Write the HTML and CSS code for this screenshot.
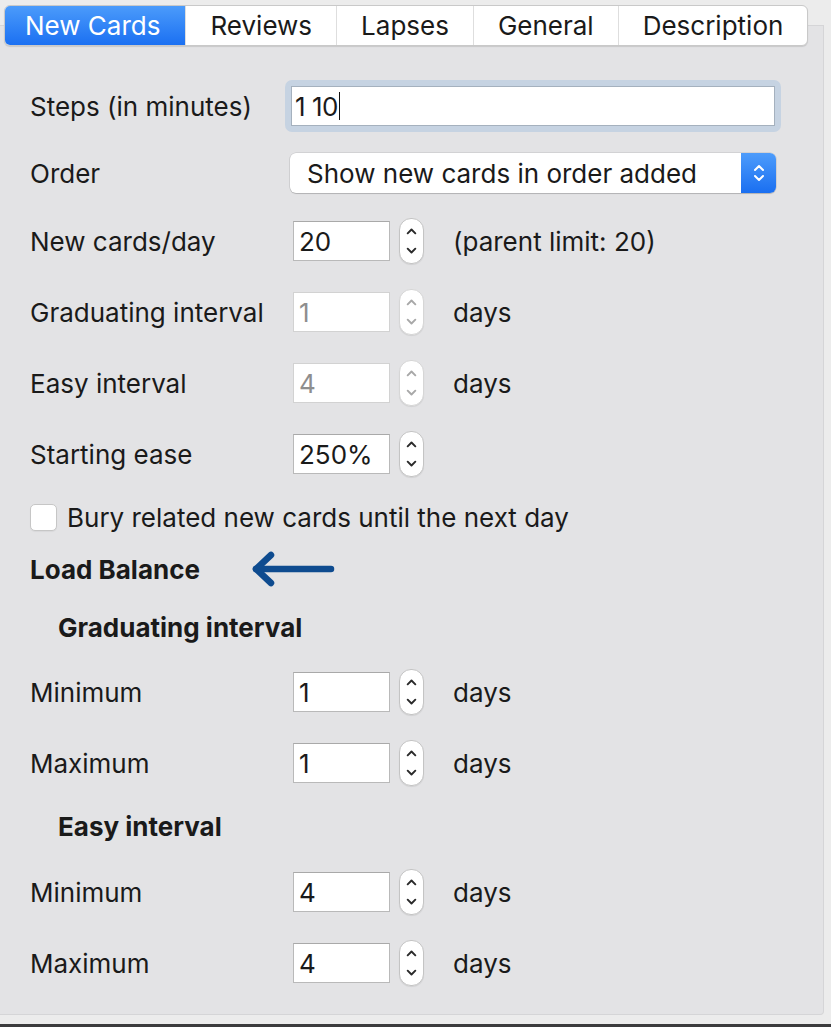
FILE: index.html
```html
<!DOCTYPE html>
<html lang="en">
<head>
<meta charset="utf-8">
<title>Options</title>
<link rel="stylesheet" href="styles.css">
</head>
<body>
<div class="tabbar">
  <div class="tab active">New Cards</div>
  <div class="tab">Reviews</div>
  <div class="tab">Lapses</div>
  <div class="tab">General</div>
  <div class="tab">Description</div>
</div>
<div class="panel">
  <div class="form">
    <div class="row">
      <span class="label">Steps (in minutes)</span>
      <div class="focus-ring"><div class="textfield">1 10<span class="caret"></span></div></div>
    </div>
    <div class="row row-order">
      <span class="label">Order</span>
      <div class="select">
        <span class="select-text">Show new cards in order added</span>
        <span class="select-btn">
          <svg width="14" height="22" viewBox="0 0 14 22"><polyline points="3,8 7,4 11,8" /><polyline points="3,14 7,18 11,14" /></svg>
        </span>
      </div>
    </div>
    <div class="row row-newcards">
      <span class="label">New cards/day</span>
      <div class="spin">
        <div class="numfield">20</div>
        <div class="stepper"><svg width="24" height="44" viewBox="0 0 24 44"><polyline points="8,14 12,10 16,14"/><polyline points="8,30 12,34 16,30"/></svg></div>
      </div>
      <span class="suffix">(parent limit: 20)</span>
    </div>
    <div class="row disabled">
      <span class="label">Graduating interval</span>
      <div class="spin">
        <div class="numfield">1</div>
        <div class="stepper"><svg width="24" height="44" viewBox="0 0 24 44"><polyline points="8,14 12,10 16,14"/><polyline points="8,30 12,34 16,30"/></svg></div>
      </div>
      <span class="suffix">days</span>
    </div>
    <div class="row disabled">
      <span class="label">Easy interval</span>
      <div class="spin">
        <div class="numfield">4</div>
        <div class="stepper"><svg width="24" height="44" viewBox="0 0 24 44"><polyline points="8,14 12,10 16,14"/><polyline points="8,30 12,34 16,30"/></svg></div>
      </div>
      <span class="suffix">days</span>
    </div>
    <div class="row">
      <span class="label">Starting ease</span>
      <div class="spin">
        <div class="numfield">250%</div>
        <div class="stepper"><svg width="24" height="44" viewBox="0 0 24 44"><polyline points="8,14 12,10 16,14"/><polyline points="8,30 12,34 16,30"/></svg></div>
      </div>
    </div>
    <div class="row row-check">
      <span class="checkbox"></span>
      <span class="check-label">Bury related new cards until the next day</span>
    </div>
    <div class="row row-section">
      <span class="section-title">Load Balance</span>
      <svg class="arrow" width="86" height="46" viewBox="0 0 86 46"><polyline points="21,9 6,23 21,37"/><line x1="6" y1="23" x2="81" y2="23"/></svg>
    </div>
    <div class="row row-sub">
      <span class="sub-title">Graduating interval</span>
    </div>
    <div class="row row-after-sub">
      <span class="label">Minimum</span>
      <div class="spin">
        <div class="numfield">1</div>
        <div class="stepper"><svg width="24" height="44" viewBox="0 0 24 44"><polyline points="8,14 12,10 16,14"/><polyline points="8,30 12,34 16,30"/></svg></div>
      </div>
      <span class="suffix">days</span>
    </div>
    <div class="row">
      <span class="label">Maximum</span>
      <div class="spin">
        <div class="numfield">1</div>
        <div class="stepper"><svg width="24" height="44" viewBox="0 0 24 44"><polyline points="8,14 12,10 16,14"/><polyline points="8,30 12,34 16,30"/></svg></div>
      </div>
      <span class="suffix">days</span>
    </div>
    <div class="row row-sub row-sub2">
      <span class="sub-title">Easy interval</span>
    </div>
    <div class="row row-after-sub2">
      <span class="label">Minimum</span>
      <div class="spin">
        <div class="numfield">4</div>
        <div class="stepper"><svg width="24" height="44" viewBox="0 0 24 44"><polyline points="8,14 12,10 16,14"/><polyline points="8,30 12,34 16,30"/></svg></div>
      </div>
      <span class="suffix">days</span>
    </div>
    <div class="row">
      <span class="label">Maximum</span>
      <div class="spin">
        <div class="numfield">4</div>
        <div class="stepper"><svg width="24" height="44" viewBox="0 0 24 44"><polyline points="8,14 12,10 16,14"/><polyline points="8,30 12,34 16,30"/></svg></div>
      </div>
      <span class="suffix">days</span>
    </div>
  </div>
</div>
<div class="bottom-line"></div>
</body>
</html>
```
FILE: styles.css
```css
* { box-sizing: border-box; }
html, body { margin: 0; padding: 0; }
body {
  background: #ececec;
  font-family: Inter, "Liberation Sans", Arial, sans-serif;
  font-size: 26px;
  color: #1a1a1a;
  width: 831px;
  height: 1027px;
  overflow: hidden;
}

.tabbar {
  position: relative;
  z-index: 1;
  display: inline-flex;
  margin: 5px 0 0 4px;
  height: 41px;
  background: #fff;
  border: 1px solid #c9c9c9;
  border-radius: 6px;
  box-shadow: 0 1px 1px rgba(0,0,0,0.12);
  overflow: hidden;
}
.tab {
  display: flex;
  align-items: center;
  padding: 0 24px;
  border-left: 1px solid #dedede;
  color: #1a1a1a;
  white-space: nowrap;
}
.tab:first-child { border-left: none; }
.tab.active {
  color: #fff;
  background: linear-gradient(#4b9bfb, #1b70f2);
  padding: 0 25px 0 20px;
}

.panel {
  margin-top: -21px;
  width: 824px;
  height: 990px;
  background: #e3e3e5;
  border: 1px solid #d5d5d7;
  border-left: none;
  border-radius: 0 0 4px 0;
  padding: 58px 0 0 30px;
}

.form {
  display: flex;
  flex-direction: column;
  gap: 27px;
}

.row {
  display: flex;
  align-items: center;
  height: 44px;
}
.row-order { margin-top: -4px; }
.row-newcards { margin-top: -3px; }
.row-check { margin-top: -8px; }
.row-section { margin-top: -19px; }
.row-sub { margin-top: -13px; padding-left: 28px; }
.row-sub2 { margin-top: -8px; }
.row-after-sub { margin-top: -6px; }
.row-after-sub2 { margin-top: -5px; }

.label {
  width: 260px;
  flex: none;
}

.focus-ring {
  padding: 6px;
  margin-left: -5px;
  background: #c6d3e2;
  border-radius: 7px;
}
.textfield {
  width: 484px;
  height: 40px;
  background: #fff;
  border: 1px solid #a5b1be;
  padding: 0 0 0 3px;
  display: flex;
  align-items: center;
  letter-spacing: -0.5px;
}
.caret {
  display: inline-block;
  width: 1.5px;
  height: 28px;
  background: #111;
  margin-left: 1px;
}

.select {
  display: flex;
  align-items: center;
  width: 486px;
  height: 40px;
  background: #fff;
  border-radius: 6px;
  box-shadow: 0 0 0 0.5px rgba(0,0,0,0.15), 0 1px 1px rgba(0,0,0,0.15);
  overflow: hidden;
}
.select-text {
  flex: 1;
  padding-left: 17px;
}
.select-btn {
  width: 35px;
  height: 100%;
  background: linear-gradient(#4d9cfb, #1a6ff1);
  display: flex;
  align-items: center;
  justify-content: center;
}
.select-btn svg polyline {
  fill: none;
  stroke: #fff;
  stroke-width: 2;
  stroke-linecap: round;
  stroke-linejoin: round;
}

.spin {
  display: flex;
  align-items: center;
  margin-left: 3px;
  gap: 9px;
}
.numfield {
  width: 97px;
  height: 40px;
  background: #fff;
  border: 1px solid #b9b9b9;
  border-top-color: #a9a9a9;
  padding-left: 5px;
  display: flex;
  align-items: center;
}
.stepper {
  width: 25px;
  height: 46px;
  background: #fff;
  border: 1px solid #c4c4c4;
  border-radius: 12px;
  display: flex;
  align-items: center;
  justify-content: center;
  box-shadow: 0 1px 1px rgba(0,0,0,0.08);
}
.stepper svg polyline {
  fill: none;
  stroke: #2a2a2a;
  stroke-width: 2;
  stroke-linecap: round;
  stroke-linejoin: round;
}
.suffix {
  margin-left: 29px;
}

.disabled .numfield {
  color: #8e8e8e;
  border-color: #d2d2d2;
}
.disabled .stepper { border-color: #d6d6d6; }
.disabled .stepper svg polyline { stroke: #a8a8a8; }

.checkbox {
  width: 27px;
  height: 27px;
  background: #fff;
  border: 1px solid #c6c6c6;
  border-radius: 5px;
  margin-right: 10px;
  box-shadow: 0 1px 1px rgba(0,0,0,0.05);
}

.section-title, .sub-title {
  font-weight: 700;
}
.arrow {
  margin-left: 50px;
}
.arrow polyline, .arrow line {
  fill: none;
  stroke: #0e4b8f;
  stroke-width: 6.5;
  stroke-linecap: round;
  stroke-linejoin: round;
}

.bottom-line {
  margin-top: 9px;
  height: 3px;
  background: #3b3b3d;
}
```
